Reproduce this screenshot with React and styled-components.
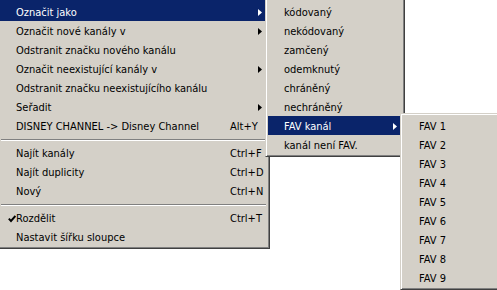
import React from "react";
import styled, { createGlobalStyle } from "styled-components";

const Global = createGlobalStyle`
  html, body { margin: 0; padding: 0; background: #fff; overflow: hidden; }
  body { font-family: "DejaVu Sans Condensed", "DejaVu Sans", sans-serif; }
`;

const Desktop = styled.div`
  position: relative;
  width: 497px;
  height: 290px;
  overflow: hidden;
  background: #ffffff;
`;

const Menu = styled.div`
  position: absolute;
  left: ${(p) => p.$x}px;
  top: ${(p) => p.$y}px;
  width: ${(p) => p.$w}px;
  display: flex;
  flex-direction: column;
  background: #d4d0c8;
  border: 1px solid;
  border-color: #d4d0c8 #404040 #404040 #d4d0c8;
  box-shadow: inset 1px 1px 0 #ffffff, inset -1px -1px 0 #808080;
  padding: 2px;
  font-family: "DejaVu Sans Condensed", "DejaVu Sans", sans-serif;
  font-stretch: condensed;
  font-size: 11px;
  color: #000;
`;

const Item = styled.div`
  display: grid;
  grid-template-columns: 16px 1fr ${(p) => p.$tail}px;
  align-items: center;
  height: ${(p) => (p.$tall ? 21 : 19)}px;
  background: ${(p) => (p.$active ? "#0a246a" : "transparent")};
  color: ${(p) => (p.$active ? "#ffffff" : "#000000")};
  white-space: nowrap;
`;

const Check = styled.span`
  display: flex;
  justify-content: flex-end;
  align-items: center;
  padding-top: 1px;
`;

const Label = styled.span`
  line-height: 19px;
  padding-top: ${(p) => (p.$tall ? 3 : 1)}px;
`;

const Tail = styled.span`
  display: flex;
  align-items: center;
  justify-content: ${(p) => (p.$arrow ? "flex-end" : "flex-start")};
  padding-right: ${(p) => (p.$arrow ? 5 : 0)}px;
  padding-top: ${(p) => (p.$tall ? 3 : 1)}px;
  line-height: 19px;
`;

const Separator = styled.div`
  margin: 4px 1px 2px;
  border-top: 1px solid #808080;
  border-bottom: 1px solid #ffffff;
`;

const Arrow = () => (
  <svg width="4" height="7" viewBox="0 0 4 7" style={{ display: "block" }}>
    <polygon points="0,0 4,3.5 0,7" fill="currentColor" />
  </svg>
);

const CheckMark = () => (
  <svg width="8" height="8" viewBox="0 0 8 8" style={{ display: "block" }}>
    <path d="M0.8 3.6 L3 6 L7.4 1" fill="none" stroke="currentColor" strokeWidth="1.9" />
  </svg>
);

const mainItems = [
  { label: "Označit jako", arrow: true, active: true, tall: true },
  { label: "Označit nové kanály v", arrow: true },
  { label: "Odstranit značku nového kanálu" },
  { label: "Označit neexistující kanály v", arrow: true },
  { label: "Odstranit značku neexistujícího kanálu" },
  { label: "Seřadit", arrow: true },
  { label: "DISNEY CHANNEL -> Disney Channel", shortcut: "Alt+Y" },
  { sep: true },
  { label: "Najít kanály", shortcut: "Ctrl+F" },
  { label: "Najít duplicity", shortcut: "Ctrl+D" },
  { label: "Nový", shortcut: "Ctrl+N" },
  { sep: true },
  { label: "Rozdělit", shortcut: "Ctrl+T", checked: true },
  { label: "Nastavit šířku sloupce" },
];

const subItems = [
  { label: "kódovaný", tall: true },
  { label: "nekódovaný" },
  { label: "zamčený" },
  { label: "odemknutý" },
  { label: "chráněný" },
  { label: "nechráněný" },
  { label: "FAV kanál", arrow: true, active: true },
  { label: "kanál není FAV." },
];

const favItems = Array.from({ length: 9 }, (_, i) => ({ label: `FAV ${i + 1}` }));

function MenuList({ items, tail }) {
  return items.map((it, i) =>
    it.sep ? (
      <Separator key={i} />
    ) : (
      <Item key={i} $active={it.active} $tall={it.tall} $tail={tail}>
        <Check>{it.checked && <CheckMark />}</Check>
        <Label $tall={it.tall}>{it.label}</Label>
        <Tail $arrow={it.arrow} $tall={it.tall}>
          {it.arrow ? <Arrow /> : it.shortcut}
        </Tail>
      </Item>
    )
  );
}

export default function App() {
  return (
    <Desktop>
      <Global />
      <Menu $x={-3} $y={-3} $w={267}>
        <MenuList items={mainItems} tail={37} />
      </Menu>
      <Menu $x={265} $y={-3} $w={134}>
        <MenuList items={subItems} tail={20} />
      </Menu>
      <Menu $x={400} $y={113} $w={120}>
        <MenuList items={favItems} tail={20} />
      </Menu>
    </Desktop>
  );
}
